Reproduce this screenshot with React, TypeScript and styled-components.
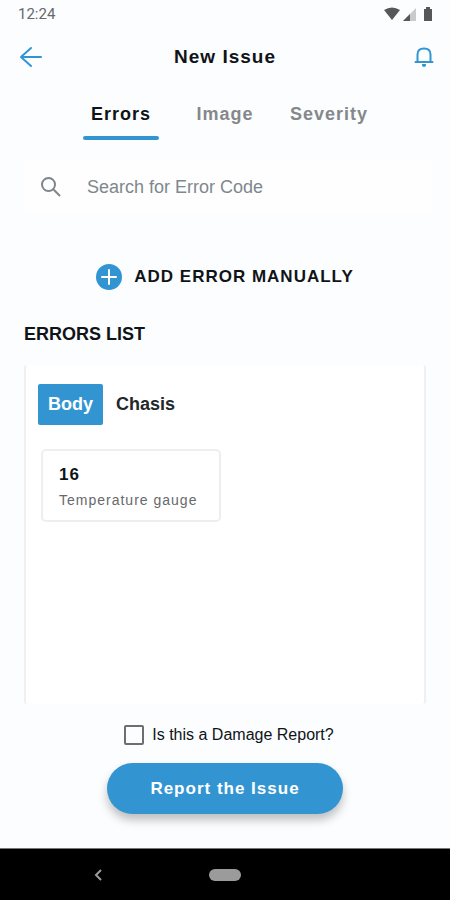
import React, { useState } from "react";
import styled, { createGlobalStyle } from "styled-components";

const blue = "#3295d2";
const ink = "#111417";

const GlobalStyle = createGlobalStyle`
  * { box-sizing: border-box; }
  body {
    margin: 0;
    background: #fbfdff;
    color: ${ink};
    font-family: "Liberation Sans", Arial, sans-serif;
  }
  button, input { font: inherit; color: inherit; letter-spacing: inherit; }
  button { border: 0; padding: 0; background: none; cursor: pointer; }
`;

const Screen = styled.div`
  min-height: 100vh;
  display: flex;
  flex-direction: column;
`;

const StatusBar = styled.div`
  height: 28px;
  padding: 0 16px 0 18px;
  display: flex;
  align-items: center;
  justify-content: space-between;
  font-family: Roboto, sans-serif;
  font-size: 15px;
  color: #66696b;
`;

const StatusIcons = styled.svg`
  display: block;
`;

const Header = styled.header`
  height: 58px;
  padding: 0 14px;
  display: grid;
  grid-template-columns: 28px 1fr 28px;
  align-items: center;
`;

const Title = styled.h1`
  margin: 0;
  text-align: center;
  font-size: 19px;
  letter-spacing: 1px;
`;

const IconButton = styled.button`
  width: 24px;
  height: 24px;
  justify-self: end;
  display: flex;
  align-items: center;
  justify-content: center;
  color: ${blue};
`;

const Tabs = styled.nav`
  display: grid;
  grid-template-columns: repeat(3, 104px);
  justify-content: center;
  margin-top: 12px;
`;

const Tab = styled.button<{ $active?: boolean }>`
  height: 42px;
  padding-bottom: 10px;
  font-size: 18px;
  font-weight: bold;
  letter-spacing: 1px;
  position: relative;
  color: ${(p) => (p.$active ? ink : "#85888a")};
  &::after {
    content: "";
    position: absolute;
    left: 14px;
    right: 14px;
    bottom: 0;
    height: 4px;
    border-radius: 2px;
    background: ${(p) => (p.$active ? blue : "transparent")};
  }
`;

const SearchBox = styled.label`
  margin: 20px 18px 0 24px;
  height: 54px;
  padding: 0 16px;
  display: flex;
  align-items: center;
  gap: 25px;
  background: #fefefe;
  color: #7d868b;
`;

const SearchInput = styled.input`
  flex: 1;
  min-width: 0;
  border: 0;
  padding: 0;
  outline: 0;
  background: none;
  font-size: 18px;
  &::placeholder {
    color: #7d888e;
    opacity: 1;
  }
`;

const AddButton = styled.button`
  align-self: center;
  margin-top: 49px;
  height: 28px;
  display: flex;
  align-items: center;
  gap: 12px;
  font-size: 17px;
  font-weight: bold;
  letter-spacing: 1px;
`;

const SectionTitle = styled.h2`
  margin: 32px 24px 0;
  font-size: 18px;
  line-height: 22px;
`;

const Panel = styled.section`
  flex: 1;
  margin: 20px 24px 0;
  padding: 19px 12px;
  background: #ffffff;
  border: solid #edf1f2;
  border-width: 0 2px;
  border-radius: 3px;
`;

const Categories = styled.div`
  display: flex;
  gap: 3px;
`;

const Category = styled.button<{ $active?: boolean }>`
  height: 41px;
  padding: 0 10px;
  border-radius: 2px;
  font-size: 18px;
  font-weight: bold;
  background: ${(p) => (p.$active ? blue : "transparent")};
  color: ${(p) => (p.$active ? "#ffffff" : "#24272a")};
`;

const ErrorCard = styled.article`
  width: 180px;
  margin: 24px 0 0 3px;
  padding: 14px 16px 11px;
  border: 2px solid #eceef0;
  border-radius: 5px;
`;

const ErrorCode = styled.div`
  font-size: 17px;
  line-height: 20px;
  font-weight: bold;
  letter-spacing: 1px;
`;

const ErrorName = styled.div`
  margin-top: 6px;
  font-size: 14px;
  line-height: 18px;
  letter-spacing: 1px;
  white-space: nowrap;
  color: #66696b;
`;

const Footer = styled.footer`
  display: flex;
  flex-direction: column;
  align-items: center;
  padding: 20px 24px 34px;
`;

const DamageLabel = styled.label`
  display: flex;
  align-items: center;
  gap: 8px;
  height: 22px;
  margin-left: 8px;
  font-size: 16px;
`;

const CheckBox = styled.input`
  appearance: none;
  width: 20px;
  height: 20px;
  margin: 0;
  border: 2px solid #6c6f71;
  border-radius: 2px;
  &:checked {
    background: ${blue};
  }
`;

const ReportButton = styled.button`
  margin-top: 17px;
  height: 51px;
  padding: 0 43px;
  border-radius: 26px;
  background: ${blue};
  box-shadow: 0 6px 10px rgba(0, 0, 0, 0.25);
  color: #ffffff;
  font-size: 17px;
  font-weight: bold;
  letter-spacing: 1px;
`;

const SystemBar = styled.nav`
  height: 52px;
  display: grid;
  grid-template-columns: 1fr 32px 1fr;
  align-items: center;
  background: #000000;
  border-top: 1px solid #777777;
`;

const SystemBack = styled.button`
  justify-self: center;
  margin-right: 14px;
  display: flex;
`;

const SystemHome = styled.button`
  height: 12px;
  border-radius: 6px;
  background: #9b9b9b;
`;

const tabs = ["Errors", "Image", "Severity"];
const categories = ["Body", "Chasis"];

export default function App() {
  const [tab, setTab] = useState("Errors");
  const [category, setCategory] = useState("Body");

  return (
    <>
      <GlobalStyle />
      <Screen>
        <StatusBar>
          <span>12:24</span>
          <StatusIcons width="50" height="16" viewBox="0 0 50 16" aria-hidden="true">
            <path d="M0 4Q8-1 16 4L8 14Z" fill="#55585a" />
            <path d="M32 2V15H19Z" fill="#c8cacb" />
            <path d="M26 8V15H19Z" fill="#55585a" />
            <path d="M42 1h4v2h2v12h-8V3h2Z" fill="#55585a" />
          </StatusIcons>
        </StatusBar>
        <Header>
          <IconButton aria-label="Back">
            <svg width="24" height="24" viewBox="0 0 24 24" fill="none" stroke="currentColor" strokeWidth="2" strokeLinecap="round" strokeLinejoin="round">
              <path d="M23 12H3M13 3L3 12L13 21" />
            </svg>
          </IconButton>
          <Title>New Issue</Title>
          <IconButton aria-label="Notifications">
            <svg width="24" height="24" viewBox="0 0 24 24" fill="none" stroke="currentColor" strokeWidth="2" strokeLinecap="round">
              <path d="M3.500 17H20.500M5.500 16.500V9.500C5.500 5.500 8 3.500 12 3.500S18.500 5.500 18.500 9.500V16.500" />
              <path d="M10 19H14V20Q14 22 12 22T10 20Z" fill="currentColor" stroke="none" />
            </svg>
          </IconButton>
        </Header>
        <Tabs>
          {tabs.map((name) => (
            <Tab key={name} $active={tab === name} onClick={() => setTab(name)}>
              {name}
            </Tab>
          ))}
        </Tabs>
        <SearchBox>
          <svg width="22" height="22" viewBox="0 0 22 22" fill="none" stroke="currentColor" strokeWidth="2" aria-hidden="true">
            <circle cx="8.500" cy="8.500" r="6.500" />
            <path d="M13 13L20 20" />
          </svg>
          <SearchInput type="text" aria-label="Search for Error Code" placeholder="Search for Error Code" />
        </SearchBox>
        <AddButton>
          <svg width="26" height="26" viewBox="0 0 26 26" aria-hidden="true">
            <circle cx="13" cy="13" r="13" fill={blue} />
            <path d="M13 6V20M6 13H20" stroke="#ffffff" strokeWidth="2" strokeLinecap="round" />
          </svg>
          ADD ERROR MANUALLY
        </AddButton>
        <SectionTitle>ERRORS LIST</SectionTitle>
        <Panel>
          <Categories>
            {categories.map((name) => (
              <Category key={name} $active={category === name} onClick={() => setCategory(name)}>
                {name}
              </Category>
            ))}
          </Categories>
          <ErrorCard>
            <ErrorCode>16</ErrorCode>
            <ErrorName>Temperature gauge</ErrorName>
          </ErrorCard>
        </Panel>
        <Footer>
          <DamageLabel>
            <CheckBox type="checkbox" />
            Is this a Damage Report?
          </DamageLabel>
          <ReportButton>Report the Issue</ReportButton>
        </Footer>
        <SystemBar>
          <SystemBack aria-label="System back">
            <svg width="10" height="12" viewBox="0 0 10 12" fill="none" stroke="#9b9b9b" strokeWidth="2">
              <path d="M8 1L3 6L8 11" />
            </svg>
          </SystemBack>
          <SystemHome aria-label="System home" />
        </SystemBar>
      </Screen>
    </>
  );
}
